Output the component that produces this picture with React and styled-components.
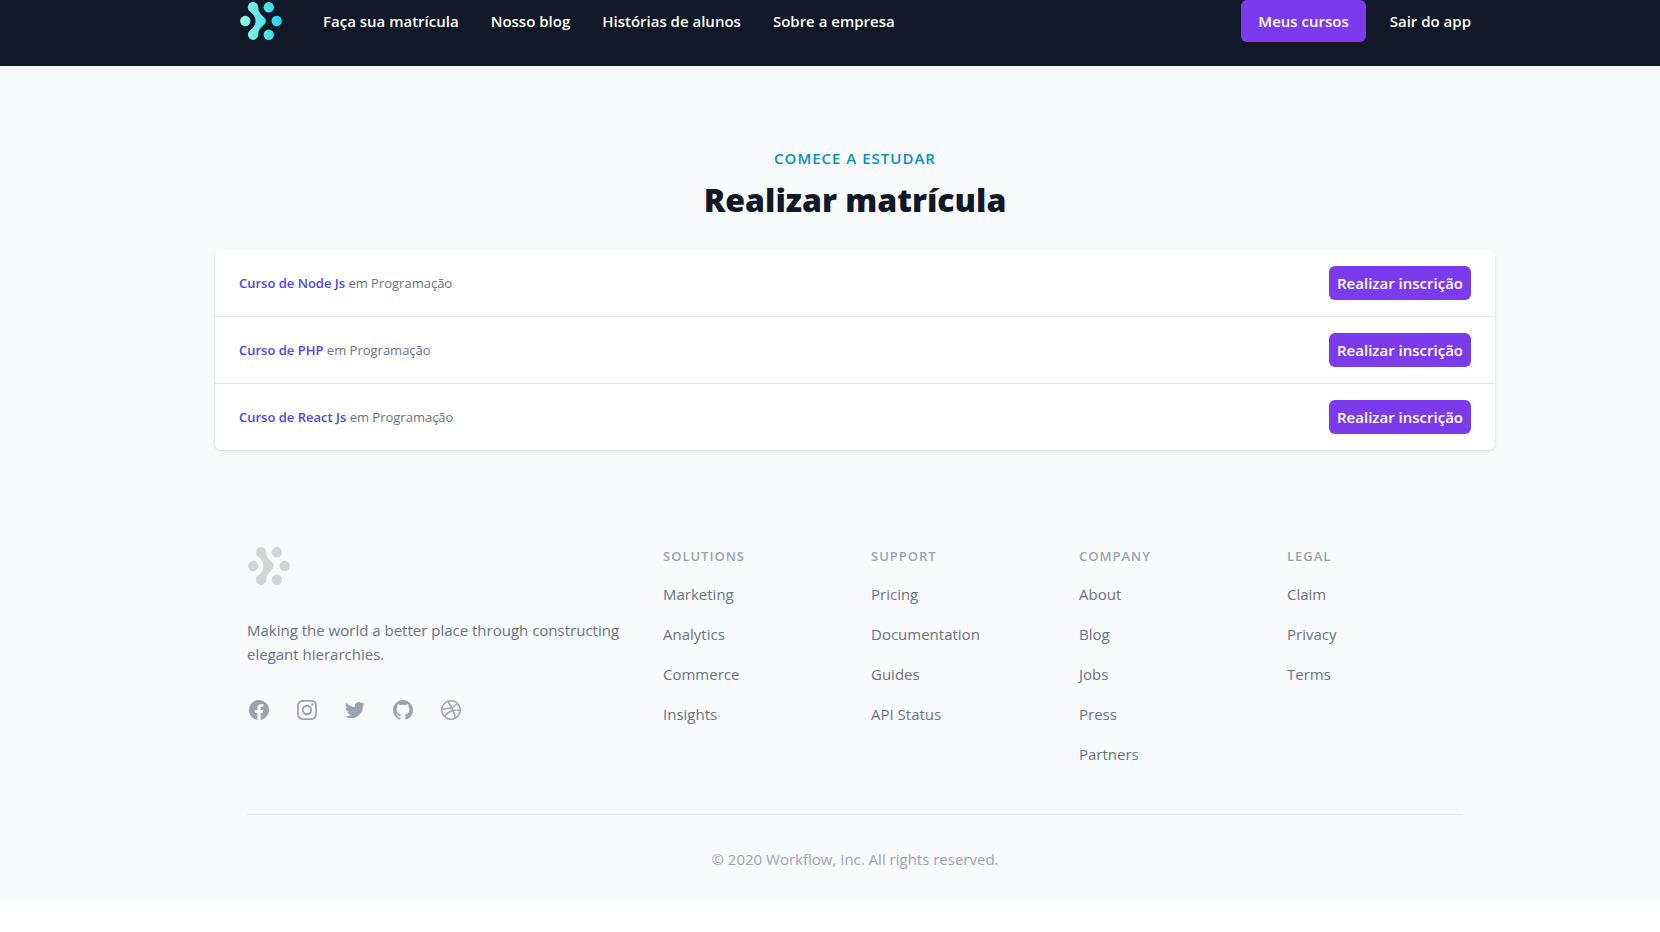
import React from "react";
import styled, { createGlobalStyle } from "styled-components";

const GlobalStyle = createGlobalStyle`
  *, *::before, *::after { box-sizing: border-box; }
  body {
    margin: 0;
    background: #ffffff;
    color: #111827;
    font-family: "Open Sans", "Noto Sans", sans-serif;
    font-size: 15px;
    line-height: 24px;
  }
  h1, h2, p, ul { margin: 0; padding: 0; }
  ul { list-style: none; }
  a { color: inherit; text-decoration: none; }
  button { font: inherit; cursor: pointer; }
`;

const Header = styled.header`
  padding: 0 0 24px 50px;
  background: #111827;
`;

const Container = styled.div`
  max-width: 1280px;
  margin: 0 auto;
`;

const Bar = styled.div`
  display: flex;
  align-items: center;
  gap: 40px;
  padding: 0 24px;
`;

const LogoSvg = styled.svg`
  display: block;
  width: 44px;
  height: 40px;
  flex: none;
`;

const Nav = styled.nav`
  display: flex;
  flex: 1;
  gap: 32px;
`;

const Account = styled.div`
  display: flex;
  align-items: center;
  gap: 24px;
`;

const NavLink = styled.a`
  color: #ffffff;
  font-weight: 600;
  white-space: nowrap;
`;

const Button = styled.button`
  height: ${(p) => (p.$compact ? "34px" : "42px")};
  padding: 0 ${(p) => (p.$compact ? "8px" : "17px")};
  border: 0;
  border-radius: 6px;
  background: #7c3aed;
  color: #ffffff;
  font-weight: 600;
  white-space: nowrap;
`;

const Body = styled.div`
  padding-left: 50px;
  background: #f9fafc;
`;

const Titles = styled.div`
  display: flex;
  flex-direction: column;
  gap: 8px;
  padding: 80px 0 28px;
  text-align: center;
`;

const Eyebrow = styled.p`
  color: #0891b2;
  font-weight: 600;
  letter-spacing: 1px;
  text-transform: uppercase;
`;

const Title = styled.h1`
  font-size: 32px;
  font-weight: 800;
  line-height: 44px;
`;

const CourseList = styled.ul`
  overflow: hidden;
  border-radius: 6px;
  background: #ffffff;
  box-shadow: 0 1px 3px rgba(0, 0, 0, 0.1), 0 1px 2px rgba(0, 0, 0, 0.06);
`;

const CourseRow = styled.li`
  display: flex;
  align-items: center;
  justify-content: space-between;
  padding: 16px 24px;

  & + & { border-top: 1px solid #e5e7eb; }
`;

const CourseText = styled.p`
  color: #6b7280;
  font-size: 13px;
  line-height: 20px;
`;

const CourseName = styled.a`
  color: #4f46e5;
  font-weight: 600;
`;

const Footer = styled.footer`
  padding: 96px 32px 32px;
`;

const FooterGrid = styled.div`
  display: grid;
  grid-template-columns: repeat(3, minmax(0, 1fr));
  gap: 32px;
`;

const Brand = styled.div`
  display: flex;
  flex-direction: column;
  gap: 32px;
  color: #6b7280;
`;

const Social = styled.div`
  display: flex;
  gap: 24px;
  color: #9ca3af;
`;

const SocialIcon = styled.svg`
  display: block;
  width: 24px;
  height: 24px;
  fill: currentColor;
`;

const LinkColumns = styled.div`
  display: grid;
  grid-column: span 2;
  grid-template-columns: repeat(4, minmax(0, 1fr));
  gap: 32px;
`;

const ColumnTitle = styled.h2`
  margin-bottom: 16px;
  color: #9ca3af;
  font-size: 13px;
  font-weight: 600;
  line-height: 20px;
  letter-spacing: 1px;
  text-transform: uppercase;
`;

const LinkList = styled.ul`
  display: flex;
  flex-direction: column;
  gap: 16px;
  color: #6b7280;
`;

const Copyright = styled.p`
  margin-top: 48px;
  padding-top: 32px;
  border-top: 1px solid #e5e7eb;
  color: #9ca3af;
  text-align: center;
`;

function Logo({ fill, title }) {
  return (
    <LogoSvg viewBox="0 0 44 40" role="img" aria-label={title}>
      <defs>
        <linearGradient id="mark" x1="1" y1="20" x2="43" y2="20" gradientUnits="userSpaceOnUse">
          <stop stopColor="#99f6e4" />
          <stop offset="1" stopColor="#22d3ee" />
        </linearGradient>
      </defs>
      <g fill={fill}>
        <circle cx="6.3" cy="20" r="5.2" />
        <circle cx="29.8" cy="6.3" r="5.2" />
        <circle cx="37.7" cy="20" r="5.2" />
        <circle cx="29.8" cy="33.7" r="5.2" />
        <path d="M14.1 1.1a5.2 5.2 0 0 1 5.2 5.2c0 2.600.6 4.600 2.400 6.600l3.700 3.900c2 2 2 4.400 0 6.400l-3.700 3.900c-1.800 2-2.400 4-2.400 6.600a5.200 5.200 0 1 1-8.600-4c3.800-3.200 5.800-5.700 5.800-9.700s-2-6.500-5.800-9.700a5.200 5.200 0 0 1 3.400-9.200z" />
      </g>
    </LogoSvg>
  );
}

const socials = [
  ["Facebook", "M22 12c0-5.523-4.477-10-10-10S2 6.477 2 12c0 4.991 3.657 9.128 8.438 9.878v-6.987h-2.540V12h2.540V9.797c0-2.506 1.492-3.890 3.777-3.890 1.094 0 2.238.195 2.238.195v2.460h-1.260c-1.243 0-1.630.771-1.630 1.562V12h2.773l-.443 2.890h-2.330v6.988C18.343 21.128 22 16.991 22 12z"],
  ["Instagram", "M12.315 2c2.430 0 2.784.013 3.808.060 1.064.049 1.791.218 2.427.465a4.902 4.902 0 011.772 1.153 4.902 4.902 0 011.153 1.772c.247.636.416 1.363.465 2.427.048 1.067.060 1.407.060 4.123v.080c0 2.643-.012 2.987-.060 4.043-.049 1.064-.218 1.791-.465 2.427a4.902 4.902 0 01-1.153 1.772 4.902 4.902 0 01-1.772 1.153c-.636.247-1.363.416-2.427.465-1.067.048-1.407.060-4.123.060h-.080c-2.643 0-2.987-.012-4.043-.060-1.064-.049-1.791-.218-2.427-.465a4.902 4.902 0 01-1.772-1.153 4.902 4.902 0 01-1.153-1.772c-.247-.636-.416-1.363-.465-2.427-.047-1.024-.060-1.379-.060-3.808v-.630c0-2.430.013-2.784.060-3.808.049-1.064.218-1.791.465-2.427a4.902 4.902 0 011.153-1.772A4.902 4.902 0 015.450 2.525c.636-.247 1.363-.416 2.427-.465C8.901 2.013 9.256 2 11.685 2h.630zm-.081 1.802h-.468c-2.456 0-2.784.011-3.807.058-.975.045-1.504.207-1.857.344-.467.182-.800.398-1.150.748-.350.350-.566.683-.748 1.150-.137.353-.300.882-.344 1.857-.047 1.023-.058 1.351-.058 3.807v.468c0 2.456.011 2.784.058 3.807.045.975.207 1.504.344 1.857.182.466.399.800.748 1.150.350.350.683.566 1.150.748.353.137.882.300 1.857.344 1.054.048 1.370.058 4.041.058h.080c2.597 0 2.917-.010 3.960-.058.976-.045 1.505-.207 1.858-.344.466-.182.800-.398 1.150-.748.350-.350.566-.683.748-1.150.137-.353.300-.882.344-1.857.048-1.055.058-1.370.058-4.041v-.080c0-2.597-.010-2.917-.058-3.960-.045-.976-.207-1.505-.344-1.858a3.097 3.097 0 00-.748-1.150 3.098 3.098 0 00-1.150-.748c-.353-.137-.882-.300-1.857-.344-1.023-.047-1.351-.058-3.807-.058zM12 6.865a5.135 5.135 0 110 10.270 5.135 5.135 0 010-10.270zm0 1.802a3.333 3.333 0 100 6.666 3.333 3.333 0 000-6.666zm5.338-3.205a1.200 1.200 0 110 2.400 1.200 1.200 0 010-2.400z"],
  ["Twitter", "M8.290 20.251c7.547 0 11.675-6.253 11.675-11.675 0-.178 0-.355-.012-.530A8.348 8.348 0 0022 5.920a8.190 8.190 0 01-2.357.646 4.118 4.118 0 001.804-2.270 8.224 8.224 0 01-2.605.996 4.107 4.107 0 00-6.993 3.743 11.650 11.650 0 01-8.457-4.287 4.106 4.106 0 001.270 5.477A4.072 4.072 0 012.800 9.713v.052a4.105 4.105 0 003.292 4.022 4.095 4.095 0 01-1.853.070 4.108 4.108 0 003.834 2.850A8.233 8.233 0 012 18.407a11.616 11.616 0 006.290 1.840"],
  ["GitHub", "M12 2C6.477 2 2 6.484 2 12.017c0 4.425 2.865 8.180 6.839 9.504.500.092.682-.217.682-.483 0-.237-.008-.868-.013-1.703-2.782.605-3.369-1.343-3.369-1.343-.454-1.158-1.110-1.466-1.110-1.466-.908-.620.069-.608.069-.608 1.003.070 1.531 1.032 1.531 1.032.892 1.530 2.341 1.088 2.910.832.092-.647.350-1.088.636-1.338-2.220-.253-4.555-1.113-4.555-4.951 0-1.093.390-1.988 1.029-2.688-.103-.253-.446-1.272.098-2.650 0 0 .840-.270 2.750 1.026A9.564 9.564 0 0112 6.844c.850.004 1.705.115 2.504.337 1.909-1.296 2.747-1.027 2.747-1.027.546 1.379.202 2.398.100 2.651.640.700 1.028 1.595 1.028 2.688 0 3.848-2.339 4.695-4.566 4.943.359.309.678.920.678 1.855 0 1.338-.012 2.419-.012 2.747 0 .268.180.580.688.482A10.019 10.019 0 0022 12.017C22 6.484 17.522 2 12 2z"],
  ["Dribbble", "M12 2C6.480 2 2 6.480 2 12s4.480 10 10 10c5.510 0 10-4.480 10-10S17.510 2 12 2zm6.605 4.610a8.502 8.502 0 011.930 5.314c-.281-.054-3.101-.629-5.943-.271-.065-.141-.120-.293-.184-.445a25.416 25.416 0 00-.564-1.236c3.145-1.280 4.577-3.124 4.761-3.362zM12 3.475c2.170 0 4.154.813 5.662 2.148-.152.216-1.443 1.941-4.480 3.080-1.399-2.570-2.950-4.675-3.189-5A8.687 8.687 0 0112 3.475zm-3.633.803a53.896 53.896 0 013.167 4.935c-3.992 1.063-7.517 1.040-7.896 1.040a8.581 8.581 0 014.729-5.975zM3.453 12.010v-.260c.370.010 4.512.065 8.775-1.215.250.477.477.965.694 1.453-.109.033-.228.065-.336.098-4.404 1.420-6.747 5.303-6.942 5.629a8.522 8.522 0 01-2.190-5.705zM12 20.547a8.482 8.482 0 01-5.239-1.800c.152-.315 1.888-3.656 6.703-5.337.022-.010.033-.010.054-.022a35.318 35.318 0 011.823 6.475 8.400 8.400 0 01-3.341.684zm4.761-1.465c-.086-.520-.542-3.015-1.659-6.084 2.679-.423 5.022.271 5.314.369a8.468 8.468 0 01-3.655 5.715z"],
];

const courses = ["Curso de Node Js", "Curso de PHP", "Curso de React Js"];

const columns = [
  ["Solutions", ["Marketing", "Analytics", "Commerce", "Insights"]],
  ["Support", ["Pricing", "Documentation", "Guides", "API Status"]],
  ["Company", ["About", "Blog", "Jobs", "Press", "Partners"]],
  ["Legal", ["Claim", "Privacy", "Terms"]],
];

export default function App() {
  return (
    <>
      <GlobalStyle />
      <Header>
        <Container>
          <Bar>
            <a href="#inicio"><Logo fill="url(#mark)" title="Workflow" /></a>
            <Nav>
              <NavLink href="#matricula">Faça sua matrícula</NavLink>
              <NavLink href="#blog">Nosso blog</NavLink>
              <NavLink href="#historias">Histórias de alunos</NavLink>
              <NavLink href="#empresa">Sobre a empresa</NavLink>
            </Nav>
            <Account>
              <Button type="button">Meus cursos</Button>
              <NavLink href="#sair">Sair do app</NavLink>
            </Account>
          </Bar>
        </Container>
      </Header>
      <Body>
        <Container>
          <main>
            <Titles>
              <Eyebrow>Comece a estudar</Eyebrow>
              <Title>Realizar matrícula</Title>
            </Titles>
            <CourseList>
              {courses.map((name) => (
                <CourseRow key={name}>
                  <CourseText>
                    <CourseName href="#curso">{name}</CourseName> em Programação
                  </CourseText>
                  <Button type="button" $compact>Realizar inscrição</Button>
                </CourseRow>
              ))}
            </CourseList>
          </main>
          <Footer>
            <FooterGrid>
              <Brand>
                <Logo fill="#d4d4d8" title="Workflow" />
                <p>Making the world a better place through constructing elegant hierarchies.</p>
                <Social>
                  {socials.map(([name, path]) => (
                    <a key={name} href={`#${name.toLowerCase()}`} aria-label={name}>
                      <SocialIcon viewBox="0 0 24 24" aria-hidden="true">
                        <path fillRule="evenodd" clipRule="evenodd" d={path} />
                      </SocialIcon>
                    </a>
                  ))}
                </Social>
              </Brand>
              <LinkColumns>
                {columns.map(([title, links]) => (
                  <section key={title}>
                    <ColumnTitle>{title}</ColumnTitle>
                    <LinkList>
                      {links.map((link) => (
                        <li key={link}><a href={`#${link.toLowerCase().replace(" ", "-")}`}>{link}</a></li>
                      ))}
                    </LinkList>
                  </section>
                ))}
              </LinkColumns>
            </FooterGrid>
            <Copyright>© 2020 Workflow, Inc. All rights reserved.</Copyright>
          </Footer>
        </Container>
      </Body>
    </>
  );
}
